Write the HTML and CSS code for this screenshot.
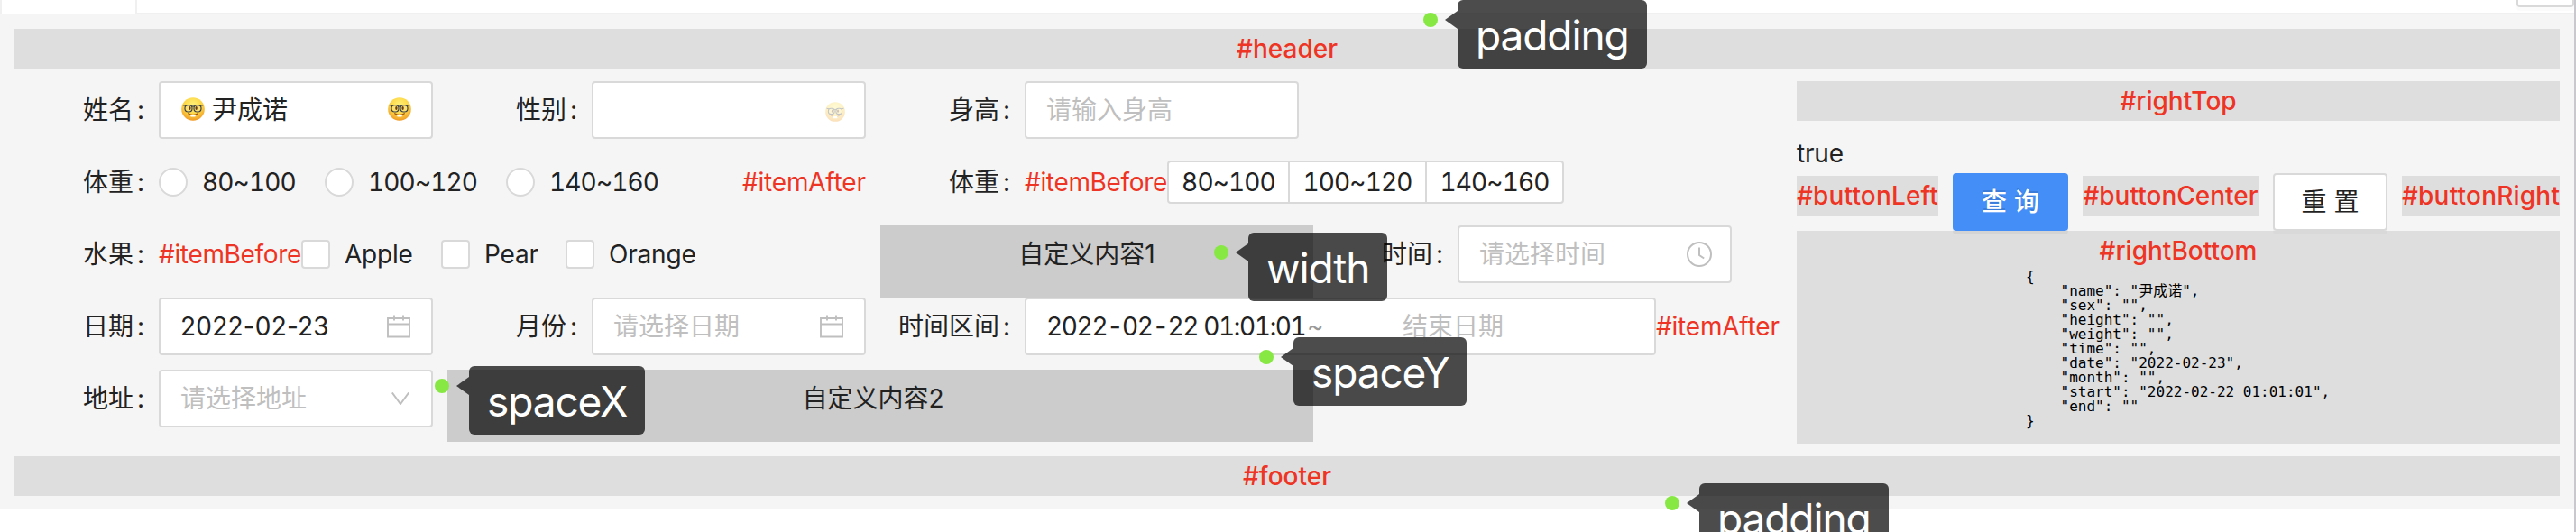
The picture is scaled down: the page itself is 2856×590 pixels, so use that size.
FILE: index.html
```
<!DOCTYPE html>
<html lang="zh-CN">
<head>
<meta charset="utf-8">
<title>查询表单</title>
<link rel="stylesheet" href="styles.css">
</head>
<body>
<svg class="defs" width="0" height="0" aria-hidden="true">
  <defs>
    <radialGradient id="face" cx="50%" cy="32%" r="68%">
      <stop offset="0" stop-color="#fff27a"/>
      <stop offset=".55" stop-color="#fdd848"/>
      <stop offset="1" stop-color="#f09a24"/>
    </radialGradient>
    <symbol id="nerd" viewBox="0 0 26 26">
      <circle cx="13" cy="13" r="12.8" fill="url(#face)"/>
      <g fill="#f9e27a" fill-opacity=".75" stroke="#3b4048" stroke-width="1.2">
        <rect x="4" y="8.6" width="8" height="7.4" rx="3.4"/>
        <rect x="14" y="8.6" width="8" height="7.4" rx="3.4"/>
      </g>
      <path d="M1.8 8.6 5 9.2M24.2 8.6 21 9.2M11.6 10.2q1.4-.8 2.8 0" fill="none" stroke="#3b4048" stroke-width="1.3"/>
      <ellipse cx="9.400" cy="12" rx="1.2" ry="1.900" fill="#6b3c10"/>
      <ellipse cx="16.600" cy="12" rx="1.2" ry="1.900" fill="#6b3c10"/>
      <path d="M7.6 17.8q5.4 3.8 10.8 0" fill="none" stroke="#9a4d12" stroke-width="1.2" stroke-linecap="round"/>
      <path d="M10.2 19h5.6v1.6q0 1-1 1h-3.6q-1 0-1-1z" fill="#fff"/>
    </symbol>
    <symbol id="calendar" viewBox="0 0 26 26">
      <path d="M1 4h24v20.500H1zM1 10.500h24M8 .5v6M18 .5v6" fill="none" stroke="currentColor" stroke-width="1.900"/>
    </symbol>
  </defs>
</svg>

<div class="page">
  <div class="tabbar"><div class="tab"></div><div class="tabrest"><div class="corner-button"></div></div></div>

  <div class="panel">
    <div class="slot">#header</div>

    <div class="body">
      <div class="form">
        <div class="item">
          <div class="label">姓名<i>:</i></div>
          <div class="input"><svg class="emoji"><use href="#nerd"/></svg><span class="value name">尹成诺</span><svg class="emoji end"><use href="#nerd"/></svg></div>
        </div>
        <div class="item">
          <div class="label">性别<i>:</i></div>
          <div class="input"><svg class="emoji small end" viewBox="0 0 26 26"><use href="#nerd"/></svg></div>
        </div>
        <div class="item span2">
          <div class="label">身高<i>:</i></div>
          <div class="input placeholder">请输入身高</div>
        </div>

        <div class="item span2">
          <div class="label">体重<i>:</i></div>
          <div class="choices">
            <label class="choice w184"><span class="radio"></span>80~100</label>
            <label class="choice w201"><span class="radio"></span>100~120</label>
            <label class="choice"><span class="radio"></span>140~160</label>
          </div>
          <div class="after push">#itemAfter</div>
        </div>
        <div class="item span2">
          <div class="label">体重<i>:</i></div>
          <div class="before">#itemBefore</div>
          <div class="segments"><span class="seg first">80~100</span><span class="seg">100~120</span><span class="seg">140~160</span></div>
        </div>

        <div class="item span2">
          <div class="label">水果<i>:</i></div>
          <div class="before">#itemBefore</div>
          <div class="choices">
            <label class="choice text w155"><span class="check"></span>Apple</label>
            <label class="choice text w138"><span class="check"></span>Pear</label>
            <label class="choice text"><span class="check"></span>Orange</label>
          </div>
        </div>
        <div class="custom">自定义内容1</div>
        <div class="item">
          <div class="label">时间<i>:</i></div>
          <div class="input placeholder">请选择时间
            <svg class="clock" viewBox="0 0 28 28"><circle cx="14" cy="14" r="13" /><path d="M14 6.500v8.500l5.200 3.500"/></svg>
          </div>
        </div>

        <div class="item">
          <div class="label">日期<i>:</i></div>
          <div class="input"><span class="value">2022-02-23</span><svg class="cal"><use href="#calendar"/></svg></div>
        </div>
        <div class="item">
          <div class="label">月份<i>:</i></div>
          <div class="input placeholder">请选择日期<svg class="cal"><use href="#calendar"/></svg></div>
        </div>
        <div class="item span2">
          <div class="label">时间区间<i>:</i></div>
          <div class="input range"><span class="start">2022-02-22 01:01:01</span><span class="tilde">~</span><span class="placeholder">结束日期</span></div>
          <div class="after">#itemAfter</div>
        </div>

        <div class="item">
          <div class="label">地址<i>:</i></div>
          <div class="input placeholder">请选择地址<svg class="arrow" viewBox="0 0 20 14"><path d="M.8.500 10 13 19.200.5"/></svg></div>
        </div>
        <div class="custom span2">自定义内容2</div>
      </div>

      <div class="side">
        <div class="slot">#rightTop</div>
        <div class="flag">true</div>
        <div class="buttons">
          <div class="slot left">#buttonLeft</div>
          <button class="btn primary"><span>查询</span></button>
          <div class="slot center">#buttonCenter</div>
          <button class="btn reset"><span>重置</span></button>
          <div class="slot right">#buttonRight</div>
        </div>
        <div class="bottom">
          <div class="slot">#rightBottom</div>
<pre>{
    "name": "尹成诺",
    "sex": "",
    "height": "",
    "weight": "",
    "time": "",
    "date": "2022-02-23",
    "month": "",
    "start": "2022-02-22 01:01:01",
    "end": ""
}</pre>
        </div>
      </div>
    </div>

    <div class="slot">#footer</div>
  </div>

  <div class="scrollbar"></div>
  <div class="tip tip-top"><b></b><span>padding</span></div>
  <div class="tip tip-width"><b></b><span>width</span></div>
  <div class="tip tip-x"><b></b><span>spaceX</span></div>
  <div class="tip tip-y"><b></b><span>spaceY</span></div>
  <div class="tip tip-bottom"><b></b><span>padding</span></div>
</div>
</body>
</html>
```
FILE: styles.css
```
* { box-sizing: border-box; }
body {
  margin: 0;
  font: 28px/44px Inter, "Noto Sans CJK SC", sans-serif;
  color: #222;
  background: #fff;
}
.defs { position: absolute; }
.page { position: relative; width: 2856px; height: 590px; overflow: hidden; }

.tabbar { display: flex; height: 16px; background: #f5f5f5; }
.tab { width: 152px; background: #fff; border: solid #f0f0f0; border-width: 0 2px; }
.tabrest { flex: 1; display: flex; justify-content: flex-end; padding-right: 2px; background: #fff; border-bottom: 2px solid #f0f0f0; }
.corner-button { width: 64px; height: 8px; border: 2px solid #d9d9d9; border-top: 0; border-radius: 0 0 4px 4px; box-shadow: 0 4px 0 rgba(0,0,0,.015); }

.panel { height: 548px; padding: 16px 18px 14px 16px; background: #f5f5f5; }
.slot { height: 44px; background: #dedede; color: #ee3424; font-weight: 500; text-align: center; }
.body { display: flex; height: 430px; padding-top: 14px; }

.form { flex: none; width: 1976px; display: grid; grid-template-columns: repeat(4, 480px); grid-auto-rows: 80px; }
.item { display: flex; align-items: center; height: 64px; padding-right: 16px; white-space: nowrap; }
.span2 { grid-column: span 2; }
.label { flex: none; width: 160px; display: flex; justify-content: flex-end; }
.label i { width: 8px; margin: 0 16px 0 4px; font-style: normal; }
.input {
  flex: none; display: flex; align-items: center;
  width: 304px; height: 64px; padding: 0 22px;
  background: #fff; border: 2px solid #d9d9d9; border-radius: 4px;
}
.placeholder { color: #bfbfbf; }
.value { letter-spacing: .2px; }
.name { margin-left: 8px; letter-spacing: 0; }
.emoji { width: 26px; height: 26px; margin-left: 1px; margin-bottom: 2px; }
.emoji.small { width: 22px; height: 22px; margin: 4px -1px 0 0; opacity: .3; }
.input .end, .cal, .clock, .arrow { margin-left: auto; }
.cal { width: 26px; height: 26px; color: #bfbfbf; margin-right: 1px; }
.clock { width: 28px; height: 28px; margin-right: -2px; fill: none; stroke: #bfbfbf; stroke-width: 2; }
.arrow { width: 20px; height: 14px; margin-right: 2px; fill: none; stroke: #bfbfbf; stroke-width: 2; }
.range { width: 700px; }
.start { flex: none; width: 289px; font-variant-numeric: tabular-nums; letter-spacing: -1.35px; }
.tilde { flex: none; width: 106px; color: #999; }

.before, .after { flex: none; color: #ee3424; }
.before { width: 158px; letter-spacing: -.33px; }
.after { width: 137px; letter-spacing: -.2px; }
.push { margin-left: auto; }
.choices { display: flex; }
.choice { display: flex; align-items: center; font-variant-numeric: tabular-nums; letter-spacing: -.85px; }
.choice.text { letter-spacing: -.2px; }
.w184 { width: 184px; }
.w201 { width: 201px; }
.w155 { width: 155px; }
.w138 { width: 138px; }
.radio, .check { flex: none; width: 32px; height: 32px; margin-right: 16px; background: #fff; border: 2px solid #d9d9d9; border-radius: 50%; }
.check { border-radius: 4px; }
.segments { display: flex; height: 48px; background: #fff; border: 2px solid #d9d9d9; border-radius: 4px; }
.seg { width: 152px; text-align: center; font-variant-numeric: tabular-nums; letter-spacing: -.85px; }
.seg + .seg { border-left: 2px solid #d9d9d9; }
.seg.first { width: 132px; }

.custom { background: #ccc; text-align: center; line-height: 64px; padding-right: 16px; }
.custom:not(.span2) { padding-right: 22px; }

.side { width: 846px; }
.flag { height: 44px; margin: 14px 0 0; letter-spacing: -.2px; }
.buttons { display: flex; gap: 16px; height: 64px; }
.buttons .slot { margin-top: 3px; white-space: nowrap; }
.left { width: 157px; letter-spacing: .15px; }
.center { width: 195px; }
.right { width: 175px; letter-spacing: .2px; }
.btn {
  flex: none; width: 128px; height: 64px; padding: 0; margin: 0;
  font: inherit; line-height: 60px; color: #222;
  background: #fff; border: 2px solid #d9d9d9; border-radius: 4px;
  box-shadow: 0 4px 0 rgba(0,0,0,.02); position: relative;
}
.btn span { letter-spacing: 8px; margin-right: -8px; }
.primary { background: #448ef7; border-color: #448ef7; color: #fff; font-weight: 500; text-shadow: 0 -2px 0 rgba(0,0,0,.12); box-shadow: 0 4px 0 rgba(0,0,0,.045); }
.reset { width: 127px; }
.bottom { height: 236px; background: #dedede; }
pre {
  width: 338px; margin: -1px auto 0; padding: 0;
  font: 16px/16px "DejaVu Sans Mono", "Noto Sans CJK SC", monospace;
  color: #000;
}

.scrollbar { position: absolute; right: 0; top: 0; width: 2px; height: 590px; background: #c8c8cd; }

.tip { position: absolute; height: 76px; }
.tip b { position: absolute; left: -38px; top: 14px; width: 16px; height: 16px; border-radius: 50%; background: #87e843; }
.tip::before {
  content: ""; position: absolute; left: -14px; top: 12px;
  border: solid transparent; border-width: 10px 14px 10px 0; border-right-color: rgba(0,0,0,.7);
}
.tip span {
  display: block; height: 76px; padding: 1px 0 0 20px;
  font-size: 46px; line-height: 76px; letter-spacing: -1.1px;
  color: #fff; background: rgba(0,0,0,.7); border-radius: 6px;
}
.tip-top { left: 1616px; top: 0; width: 210px; }
.tip-width { left: 1384px; top: 258px; width: 154px; }
.tip-x { left: 520px; top: 406px; width: 195px; }
.tip-y { left: 1434px; top: 374px; width: 192px; }
.tip-bottom { left: 1884px; top: 536px; width: 210px; }
```
